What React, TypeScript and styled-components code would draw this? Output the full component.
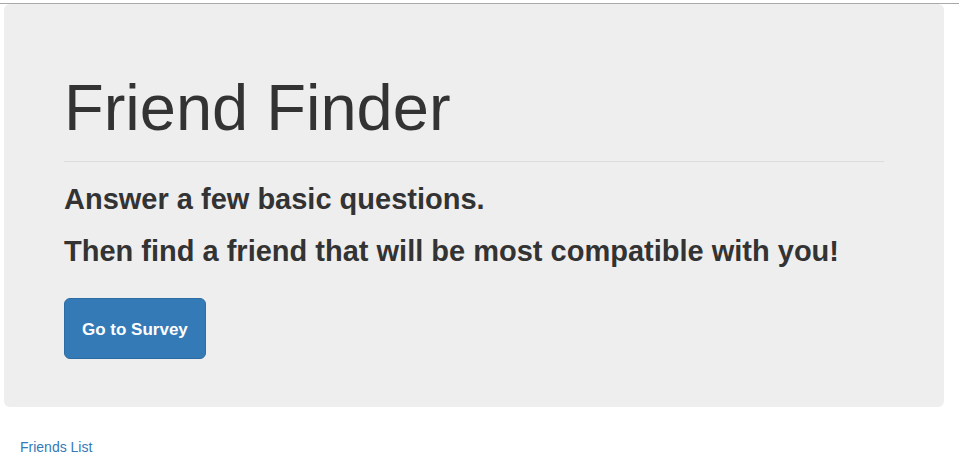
import React from "react";
import styled, { createGlobalStyle } from "styled-components";

const GlobalStyle = createGlobalStyle`
  html, body {
    margin: 0;
    padding: 0;
    background: #fff;
  }
  body {
    font-family: "Liberation Sans", Arial, Helvetica, sans-serif;
    color: #333;
  }
`;

const Page = styled.div`
  width: 959px;
  padding-top: 3px;
`;

const TopRule = styled.div`
  height: 1px;
  background: #a9a9a9;
`;

const Jumbotron = styled.section`
  box-sizing: border-box;
  width: 940px;
  margin-left: 4px;
  padding: 68px 60px 48px;
  background: #eeeeee;
  border-radius: 6px;
`;

const Title = styled.h1`
  margin: 0;
  font-size: 65px;
  line-height: 72px;
  font-weight: 400;
  color: #333;
`;

const Divider = styled.hr`
  margin: 17px 0 17px;
  border: 0;
  border-top: 1px solid #dcdcdc;
`;

const Lead = styled.p<{ $gap?: number }>`
  margin: 0 0 ${(p) => p.$gap ?? 12}px;
  font-size: 29px;
  line-height: 40px;
  font-weight: 700;
  color: #333;
`;

const SurveyButton = styled.a`
  display: inline-block;
  padding: 20px 17px 18px;
  font-size: 17px;
  line-height: 21px;
  font-weight: 700;
  color: #fff;
  background: #337ab7;
  border: 1px solid #2e6da4;
  border-radius: 6px;
  text-decoration: none;
  cursor: pointer;
`;

const Footer = styled.div`
  margin: 30px 0 0 20px;
  font-size: 14px;
  line-height: 20px;
`;

const FooterLink = styled.a`
  color: #337ab7;
  text-decoration: none;
`;

export default function App() {
  return (
    <>
      <GlobalStyle />
      <Page>
        <TopRule />
        <Jumbotron>
          <Title>Friend Finder</Title>
          <Divider />
          <Lead>Answer a few basic questions.</Lead>
          <Lead $gap={27}>Then find a friend that will be most compatible with you!</Lead>
          <SurveyButton href="#survey">Go to Survey</SurveyButton>
        </Jumbotron>
        <Footer>
          <FooterLink href="#friends">Friends List</FooterLink>
        </Footer>
      </Page>
    </>
  );
}
